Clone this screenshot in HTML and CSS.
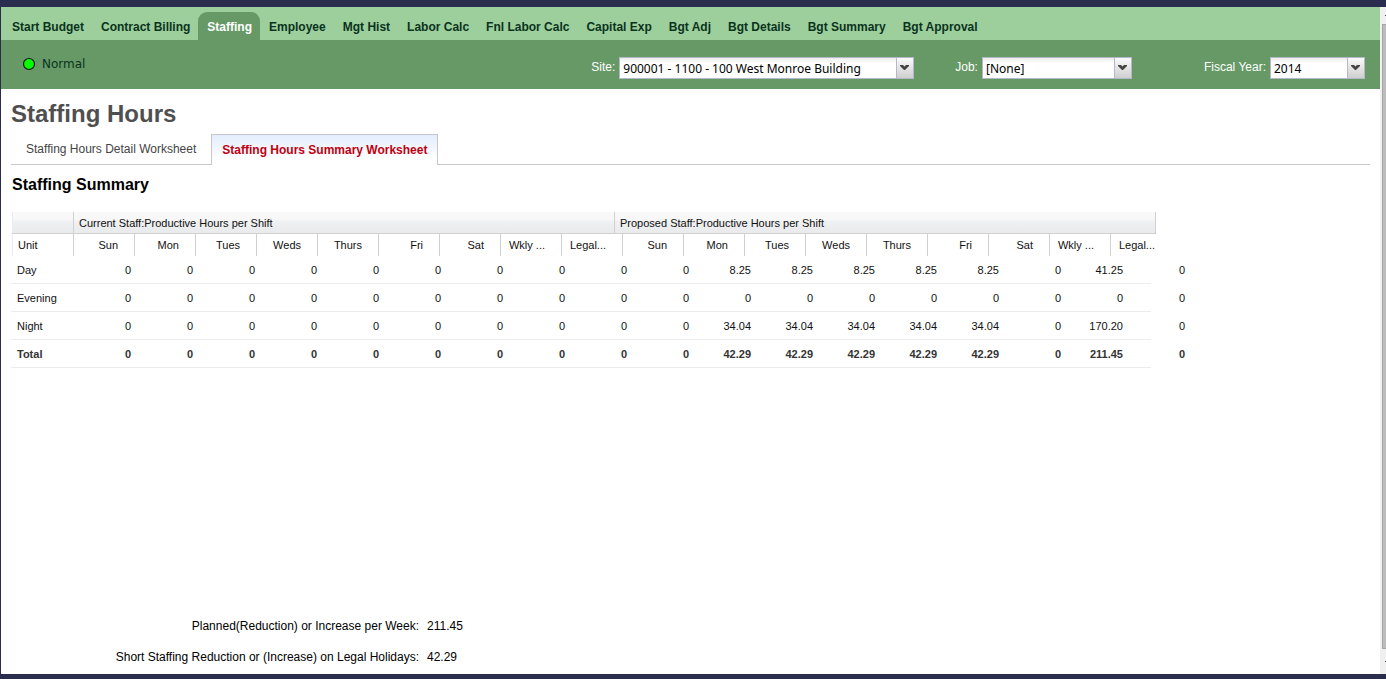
FILE: index.html
```html
<!DOCTYPE html>
<html lang="en">
<head>
<meta charset="utf-8">
<title>Staffing Hours</title>
<link rel="stylesheet" href="styles.css">
</head>
<body>
<div class="window">
  <div class="page">
    <nav class="main-nav">
      <a href="#">Start Budget</a>
      <a href="#">Contract Billing</a>
      <a href="#" class="active" aria-current="page">Staffing</a>
      <a href="#">Employee</a>
      <a href="#">Mgt Hist</a>
      <a href="#">Labor Calc</a>
      <a href="#">Fnl Labor Calc</a>
      <a href="#">Capital Exp</a>
      <a href="#">Bgt Adj</a>
      <a href="#">Bgt Details</a>
      <a href="#">Bgt Summary</a>
      <a href="#">Bgt Approval</a>
    </nav>
    <div class="toolbar">
      <div class="status">
        <svg width="14" height="14" viewBox="0 0 14 14" aria-hidden="true"><circle cx="7" cy="7" r="5.5" fill="#0f0" stroke="#111" stroke-width="1.2"/></svg>
        <span>Normal</span>
      </div>
      <div class="field field-site">
        <label for="site">Site:</label>
        <span class="combo">
          <select id="site"><option>900001 - 1100 - 100 West Monroe Building</option></select>
          <svg class="trigger" viewBox="0 0 16 20" aria-hidden="true"><path d="M3 7h3l1.500 1.500L9 7h3v1l-4 4H7L3 8z" fill="#444"/></svg>
        </span>
      </div>
      <div class="field field-job">
        <label for="job">Job:</label>
        <span class="combo">
          <select id="job"><option>[None]</option></select>
          <svg class="trigger" viewBox="0 0 16 20" aria-hidden="true"><path d="M3 7h3l1.500 1.500L9 7h3v1l-4 4H7L3 8z" fill="#444"/></svg>
        </span>
      </div>
      <div class="field field-year">
        <label for="year">Fiscal Year:</label>
        <span class="combo">
          <select id="year"><option>2014</option></select>
          <svg class="trigger" viewBox="0 0 16 20" aria-hidden="true"><path d="M3 7h3l1.500 1.500L9 7h3v1l-4 4H7L3 8z" fill="#444"/></svg>
        </span>
      </div>
    </div>
    <main class="content">
      <h1>Staffing Hours</h1>
      <div class="sheet-tabs">
        <a href="#">Staffing Hours Detail Worksheet</a>
        <a href="#" class="active" aria-current="page">Staffing Hours Summary Worksheet</a>
      </div>
      <h2>Staffing Summary</h2>
      <div class="grid-area">
        <table class="hours">
          <thead>
            <tr class="groups"><th class="unit"></th><th class="group">Current Staff:Productive Hours per Shift</th><th class="group">Proposed Staff:Productive Hours per Shift</th></tr>
            <tr class="days"><th class="unit">Unit</th><th>Sun</th><th>Mon</th><th>Tues</th><th>Weds</th><th>Thurs</th><th>Fri</th><th>Sat</th><th>Wkly ...</th><th>Legal...</th><th>Sun</th><th>Mon</th><th>Tues</th><th>Weds</th><th>Thurs</th><th>Fri</th><th>Sat</th><th>Wkly ...</th><th>Legal...</th></tr>
          </thead>
          <tbody>
            <tr><th>Day</th><td>0</td><td>0</td><td>0</td><td>0</td><td>0</td><td>0</td><td>0</td><td>0</td><td>0</td><td>0</td><td>8.25</td><td>8.25</td><td>8.25</td><td>8.25</td><td>8.25</td><td>0</td><td>41.25</td><td>0</td></tr>
            <tr><th>Evening</th><td>0</td><td>0</td><td>0</td><td>0</td><td>0</td><td>0</td><td>0</td><td>0</td><td>0</td><td>0</td><td>0</td><td>0</td><td>0</td><td>0</td><td>0</td><td>0</td><td>0</td><td>0</td></tr>
            <tr><th>Night</th><td>0</td><td>0</td><td>0</td><td>0</td><td>0</td><td>0</td><td>0</td><td>0</td><td>0</td><td>0</td><td>34.04</td><td>34.04</td><td>34.04</td><td>34.04</td><td>34.04</td><td>0</td><td>170.20</td><td>0</td></tr>
            <tr class="total"><th>Total</th><td>0</td><td>0</td><td>0</td><td>0</td><td>0</td><td>0</td><td>0</td><td>0</td><td>0</td><td>0</td><td>42.29</td><td>42.29</td><td>42.29</td><td>42.29</td><td>42.29</td><td>0</td><td>211.45</td><td>0</td></tr>
          </tbody>
        </table>
      </div>
      <dl class="summary">
        <dt>Planned(Reduction) or Increase per Week:</dt><dd>211.45</dd>
        <dt>Short Staffing Reduction or (Increase) on Legal Holidays:</dt><dd>42.29</dd>
      </dl>
    </main>
  </div>
  <div class="scrollbar" aria-hidden="true">
    <span class="arrow"></span>
    <span class="thumb"></span>
    <span class="arrow"></span>
  </div>
</div>
</body>
</html>
```

FILE: styles.css
```css
* { box-sizing: border-box; }

body {
  margin: 0;
  background: #fff;
  color: #000;
  font: 12px/16px "Liberation Sans", Arial, sans-serif;
}

.window {
  display: flex;
  min-height: 100vh;
  border: solid #2b2d4f;
  border-width: 7px 0 5px 1px;
}

.page {
  flex: 1;
  min-width: 0;
  display: flex;
  flex-direction: column;
}

/* Main navigation */
.main-nav {
  display: flex;
  align-items: flex-end;
  height: 33px;
  padding-left: 2px;
  background: #9ccf9c;
}

.main-nav a {
  padding: 7px 8px 5px 9px;
  border-radius: 9px 9px 0 0;
  color: #0b3320;
  font-weight: bold;
  text-decoration: none;
  white-space: nowrap;
}

.main-nav .active {
  background: #669966;
  color: #fff;
}

/* Toolbar */
.toolbar {
  display: flex;
  align-items: flex-start;
  height: 49px;
  padding: 16px 15px 0 21px;
  background: #669966;
}

.status {
  display: flex;
  align-items: center;
  gap: 6px;
  margin-right: auto;
  color: #0b3320;
  font: 12px/16px "DejaVu Sans", Verdana, sans-serif;
}

.field {
  display: flex;
  align-items: flex-start;
  gap: 4px;
  padding-top: 1px;
}

.field label {
  padding-top: 2px;
  color: #fff;
}

.field-job { margin-left: 41px; }
.field-year { margin-left: 72px; }

.combo {
  display: grid;
  height: 22px;
  border: 1px solid #b5b8c8;
  background: linear-gradient(#ececec, #fff 5px);
}

.field-site .combo { width: 295px; }
.field-job .combo { width: 150px; }
.field-year .combo { width: 95px; }

.combo select {
  grid-area: 1 / 1;
  width: 100%;
  padding: 2px 20px 0 3px;
  border: 0;
  background: none;
  color: #000;
  font: 12px/16px "Noto Sans", Tahoma, sans-serif;
  appearance: none;
}

.trigger {
  grid-area: 1 / 1;
  justify-self: end;
  width: 17px;
  height: 20px;
  border-left: 1px solid #b5b8c8;
  background: linear-gradient(#fafafa, #e4e4e4 50%, #cfcfcf);
  pointer-events: none;
}

/* Content */
.content {
  flex: 1;
  display: flex;
  flex-direction: column;
  padding: 11px 10px 9px;
}

h1 {
  margin: 0;
  color: #4f4f4f;
  font-size: 24px;
  line-height: 28px;
}

.sheet-tabs {
  display: flex;
  align-items: flex-end;
  gap: 5px;
  height: 31px;
  margin-top: 6px;
  padding-left: 5px;
  border-bottom: 1px solid #c8c8c8;
}

.sheet-tabs a {
  padding: 6px 10px 7px;
  color: #444;
  text-decoration: none;
  white-space: nowrap;
}

.sheet-tabs .active {
  margin-bottom: -1px;
  padding: 7px 10px;
  border: 1px solid #c8c8c8;
  border-bottom: 0;
  background: linear-gradient(#e3edfd, #fff 80%);
  color: #c00010;
  font-weight: bold;
}

h2 {
  margin: 10px 0 0 1px;
  font-size: 16px;
  line-height: 20px;
}

/* Hours grid */
.grid-area {
  flex: 1;
  padding: 17px 0 24px;
}

.hours,
.hours thead,
.hours tbody {
  display: block;
}

.hours {
  color: #111;
  font-size: 11px;
  line-height: 14px;
}

.hours tr {
  display: flex;
}

.hours th,
.hours td {
  flex: none;
  padding: 0;
  font-weight: normal;
  text-align: right;
  white-space: nowrap;
}

.hours thead {
  width: 1144px;
  margin-left: 1px;
  overflow: hidden;
}

.hours .groups {
  background: linear-gradient(#f9f9f9, #f7f7f7 8px, #f0f1f2 9px, #e8eaeb);
  border-bottom: 1px solid #d0d0d0;
}

.hours thead th {
  height: 22px;
  border-right: 1px solid #d0d0d0;
}

.hours .groups th { height: 21px; }

.hours thead .unit {
  width: 62px;
  border-left: 1px solid #ececec;
}

.hours .groups .group {
  width: 541px;
  padding: 4px 5px;
  text-align: left;
}

.hours .days th {
  width: 61px;
  padding: 4px 16px 4px 5px;
}

.hours .days .unit {
  width: 62px;
  text-align: left;
}

.hours tbody tr {
  width: 1140px;
  height: 28px;
  border-bottom: 1px solid #ececec;
}

.hours tbody th,
.hours tbody td {
  width: 62px;
  padding: 7px 4px 6px 6px;
}

.hours tbody th { text-align: left; }

.hours .total th,
.hours .total td {
  color: #333;
  font-weight: bold;
}

/* Totals below the grid */
.summary {
  display: grid;
  grid-template-columns: 408px auto;
  gap: 15px 8px;
  margin: 0;
}

.summary dt { text-align: right; }
.summary dd { margin: 0; }

/* Scrollbar */
.scrollbar {
  display: flex;
  flex-direction: column;
  width: 6px;
  padding-left: 2px;
  background: #f0f0f0;
  overflow: hidden;
}

.arrow {
  height: 17px;
  display: flex;
  align-items: center;
  justify-content: flex-end;
}

.arrow::before {
  content: "";
  width: 1px;
  height: 1px;
  background: #444;
}

.arrow:last-child { height: 25px; }

.thumb {
  flex: 1;
  border: 1px solid #a6a6a6;
  border-right: 0;
  background: #bcbcbc;
}
```
